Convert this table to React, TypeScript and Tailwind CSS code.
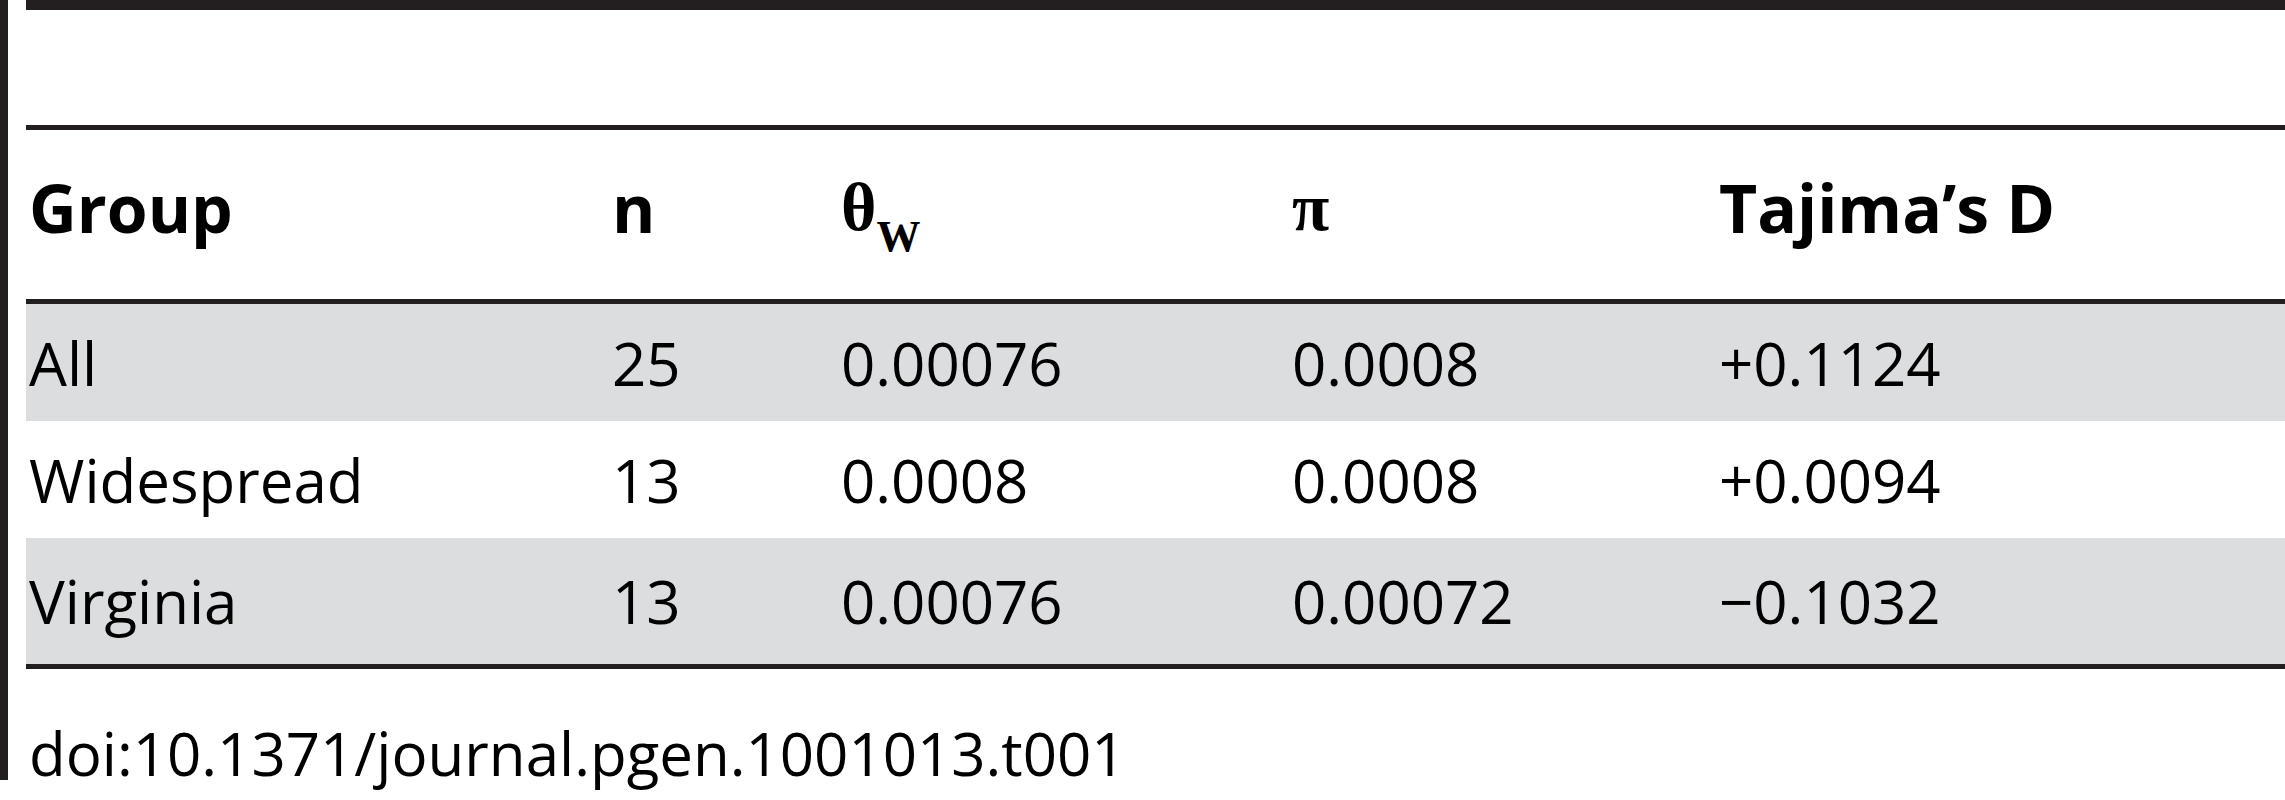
const COLS = "grid grid-cols-[583px_229px_451px_427px_1fr]";

const ROWS = [
  { group: "All", n: "25", theta: "0.00076", pi: "0.0008", d: "+0.1124", shaded: true, h: "h-[117px]" },
  { group: "Widespread", n: "13", theta: "0.0008", pi: "0.0008", d: "+0.0094", shaded: false, h: "h-[117px]" },
  { group: "Virginia", n: "13", theta: "0.00076", pi: "0.00072", d: "\u22120.1032", shaded: true, h: "h-[126px]" },
];

export default function App() {
  return (
    <div className="w-[2285px] h-[800px] bg-white overflow-hidden font-['Open_Sans',sans-serif] text-black">
      <div className="flex h-[780px]">
        <div className="w-[8px] shrink-0 bg-[#231f20]" />
        <div className="flex-1 pl-[18px]">
          <div className="h-[10px] bg-[#231f20]" />
          <div className="mt-[115px] border-t-[5px] border-b-[5px] border-[#231f20]">
            <div className={`${COLS} h-[169px] items-center text-[66px] font-bold leading-none pb-[16px]`}>
              <div className="pl-[3px]">Group</div>
              <div className="pl-[3px]">n</div>
              <div className="pl-[3px] font-['Liberation_Serif',serif] text-[68px]">
                θ<sub className="text-[44px] align-[-10px]">W</sub>
              </div>
              <div className="pl-[3px] font-['Liberation_Serif',serif] text-[68px]">π</div>
              <div className="pl-[3px]">Tajima’s D</div>
            </div>
          </div>
          <div className="border-b-[5px] border-[#231f20]">
            {ROWS.map((r) => (
              <div
                key={r.group}
                className={`${COLS} ${r.h} items-center text-[60px] leading-none ${r.shaded ? "bg-[#dcdddf]" : "bg-white"}`}
              >
                <div className="pl-[3px]">{r.group}</div>
                <div className="pl-[3px]">{r.n}</div>
                <div className="pl-[3px]">{r.theta}</div>
                <div className="pl-[3px]">{r.pi}</div>
                <div className="pl-[3px]">{r.d}</div>
              </div>
            ))}
          </div>
          <div className="mt-[54px] text-[60px] leading-none pl-[3px]">doi:10.1371/journal.pgen.1001013.t001</div>
        </div>
      </div>
    </div>
  );
}
